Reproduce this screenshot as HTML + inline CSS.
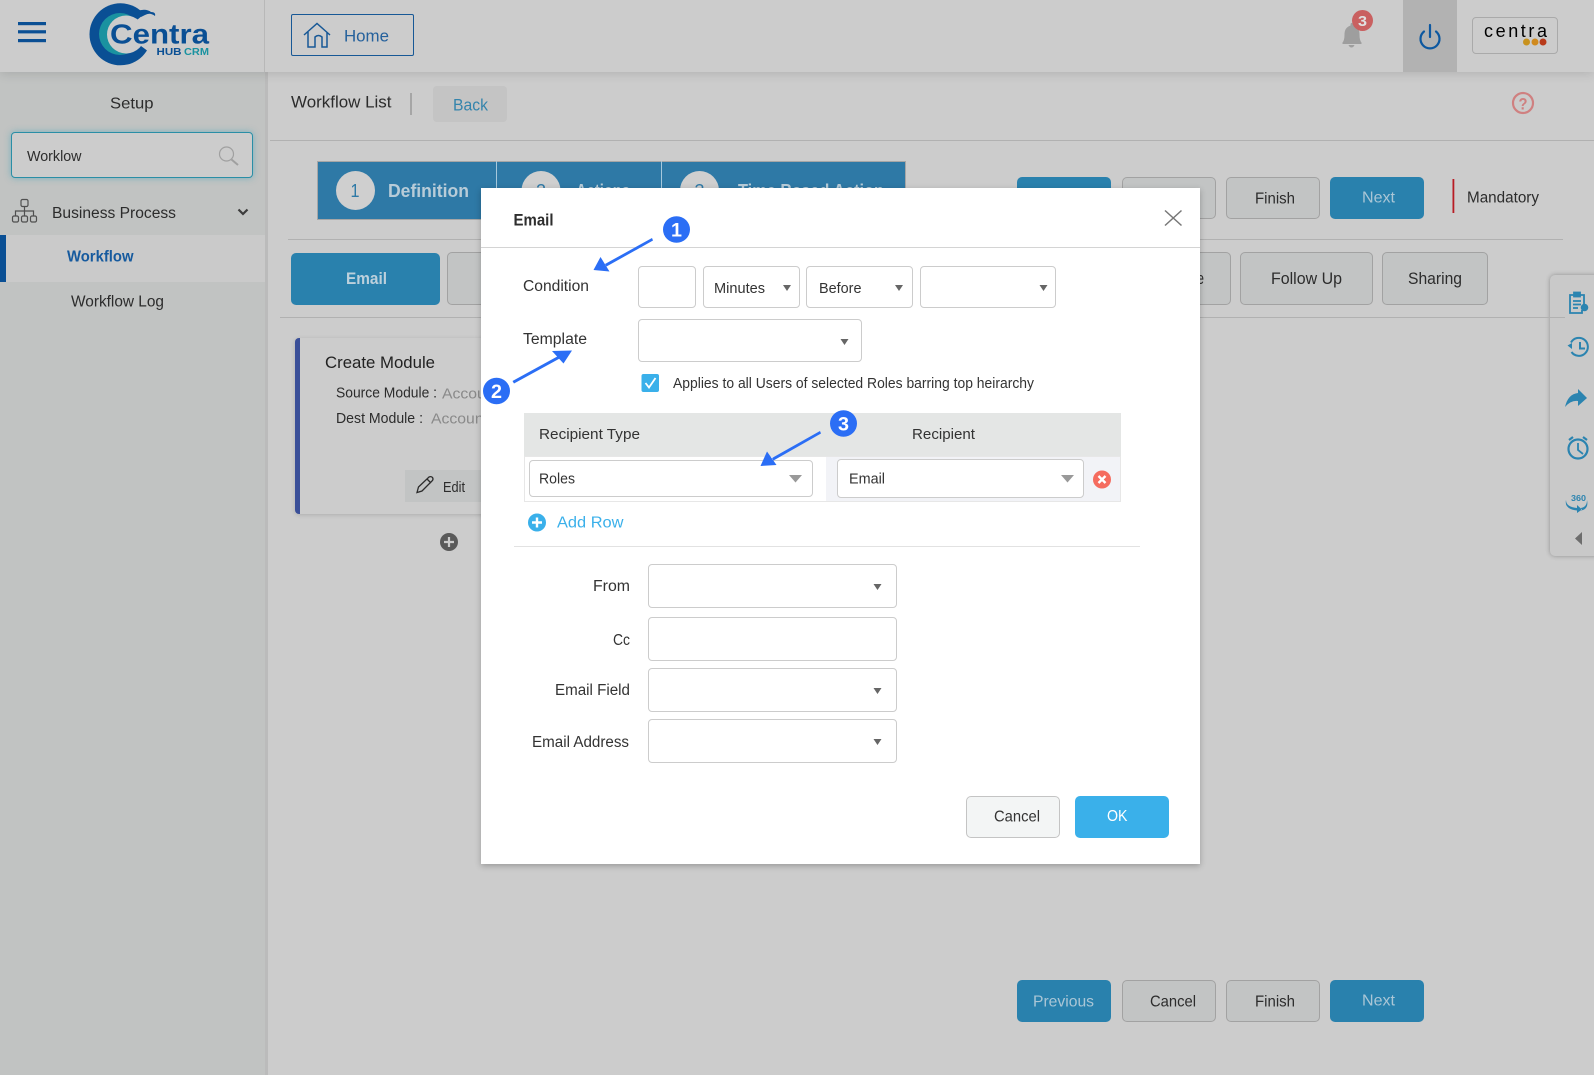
<!DOCTYPE html>
<html lang="en"><head><meta charset="utf-8"><title>Workflow - Email</title>
<style>
html,body{margin:0;padding:0;background:#ccc}
#p{position:relative;width:1594px;height:1075px;overflow:hidden;background:#ccc;font-family:"Liberation Sans",sans-serif}
#p div{position:absolute;box-sizing:border-box}
svg{position:absolute;left:0;top:0}
text{font-family:"Liberation Sans",sans-serif;font-size:15.5px;fill:#2c2c2c}
.m text{fill:#333}
.b{background:#2981ad;border-radius:5px}
.g{background:#c2c4c4;border:1px solid #a2a2a2;border-radius:5px}
.f{background:#fff;border:1px solid #ccc;border-radius:4px}
</style></head><body>
<div id="p">
 <div style="left:0;top:72px;width:265px;height:1003px;background:#c1c3c2"></div>
 <div style="left:265px;top:72px;width:3px;height:1003px;background:#bbb"></div>
 <div style="left:0;top:0;width:1594px;height:72px;background:#ccc;box-shadow:0 2px 10px rgba(0,0,0,.12)"></div>
 <div style="left:264px;top:0;width:1px;height:72px;background:#b8b8b8"></div>
 <div style="left:1403px;top:0;width:54px;height:72px;background:#b2b2b2"></div>
 <div style="left:291px;top:14px;width:123px;height:42px;border:1.5px solid #175896;border-radius:2px"></div>
 <div style="left:1472px;top:17px;width:86px;height:37px;border:1.5px solid #aaa;border-radius:4px;background:#ccc"></div>
 <div style="left:11px;top:132px;width:242px;height:46px;background:#ccc;border:1px solid #2a8ea6;border-radius:4px;box-shadow:0 0 7px rgba(46,157,184,.5)"></div>
 <div style="left:0;top:235px;width:265px;height:47px;background:#cacaca"></div>
 <div style="left:0;top:235px;width:6px;height:47px;background:#0a4f94"></div>
 <div style="left:433px;top:86px;width:74px;height:36px;background:#c4c4c4;border-radius:4px"></div>
 <div style="left:410px;top:93px;width:2px;height:22px;background:#a6a6a6"></div>
 <div style="left:317px;top:161px;width:589px;height:59px;background:#2e79a6;border:1px solid #a6a6a6"></div>
 <div style="left:496px;top:161px;width:1px;height:59px;background:#a6c8dc"></div>
 <div style="left:661px;top:161px;width:1px;height:59px;background:#a6c8dc"></div>
 <div style="left:1550px;top:275px;width:50px;height:281px;background:#c9c9c9;border-radius:5px;box-shadow:0 0 5px rgba(0,0,0,.3)"></div>
 <div style="left:270px;top:140px;width:1324px;height:1px;background:#b1b1b1"></div>
 <div style="left:288px;top:239px;width:1275px;height:1px;background:#b1b1b1"></div>
 <div style="left:280px;top:317px;width:1285px;height:1px;background:#b1b1b1"></div>
 <div class="b" style="left:291px;top:253px;width:149px;height:52px"></div>
 <div class="g" style="left:447px;top:252px;width:120px;height:53px"></div>
 <div class="g" style="left:1100px;top:252px;width:131px;height:53px"></div>
 <div class="g" style="left:1240px;top:252px;width:133px;height:53px"></div>
 <div class="g" style="left:1382px;top:252px;width:106px;height:53px"></div>
 <div class="b" style="left:1017px;top:177px;width:94px;height:42px"></div>
 <div class="g" style="left:1122px;top:177px;width:94px;height:42px"></div>
 <div class="g" style="left:1226px;top:177px;width:94px;height:42px"></div>
 <div class="b" style="left:1330px;top:177px;width:94px;height:42px"></div>
 <div class="b" style="left:1017px;top:980px;width:94px;height:42px"></div>
 <div class="g" style="left:1122px;top:980px;width:94px;height:42px"></div>
 <div class="g" style="left:1226px;top:980px;width:94px;height:42px"></div>
 <div class="b" style="left:1330px;top:980px;width:94px;height:42px"></div>
 <div style="left:295px;top:338px;width:300px;height:176px;background:#ccc;border-left:5px solid #3a4f98;border-radius:4px;box-shadow:0 1px 4px rgba(0,0,0,.15)"></div>
 <div style="left:405px;top:470px;width:100px;height:32px;background:#c2c4c4"></div>

 <svg width="1594" height="1075" viewBox="0 0 1594 1075">
  <g fill="#0a4f94"><rect x="18" y="22" width="28" height="3.200"/><rect x="18" y="30.200" width="28" height="3.200"/><rect x="18" y="39" width="28" height="3.200"/></g>
  <circle cx="120.500" cy="34.300" r="31" fill="#0a4f94"/>
  <circle cx="120" cy="34" r="21" fill="#1a92a0"/>
  <circle cx="126" cy="34.500" r="19" fill="#ccc"/>
  <path d="M141 46 L160 60 L190 60 L190 8 L152 10 Q147 13 143 15 L137 20 Z" fill="#ccc"/>
  <path d="M137 11 Q146 8 151 12 Q156 12 155 16 Q150 12 145 15 L141 17Z" fill="#0a4f94"/>
  <text x="110" y="43.500" textLength="99" lengthAdjust="spacingAndGlyphs" style="font-size:28px;font-weight:bold;fill:#0a4f94">Centra</text>
  <text x="156.500" y="55" textLength="25" lengthAdjust="spacingAndGlyphs" style="font-size:10.500px;font-weight:bold;fill:#0a4f94">HUB</text>
  <text x="184" y="55" textLength="25" lengthAdjust="spacingAndGlyphs" style="font-size:10.500px;font-weight:bold;fill:#1a92a0">CRM</text>
  <path d="M304 35 L317 23.500 L330 35 M308 32 V47 H315 V37 Q318.500 34 322 37 V47 H327 V32" fill="none" stroke="#175896" stroke-width="1.500"/>
  <text x="344" y="41.500" textLength="45" lengthAdjust="spacingAndGlyphs" style="font-size:17px;fill:#25619c">Home</text>
  <path d="M1351.500 23 q2 0 2 2.500 q6 2 6 9 q0 6 2 8 v1.500 h-19 v-1.500 q2 -2 2 -8 q0 -7 6 -9 q0 -2.500 1 -2.500Z M1348.500 45 h6 q-1 2.500 -3 2.500 t-3 -2.500Z" fill="#9e9e9e"/>
  <circle cx="1362.500" cy="20.500" r="10.500" fill="#c96060"/>
  <text x="1358" y="26" textLength="9" lengthAdjust="spacingAndGlyphs" style="font-size:15px;font-weight:bold;fill:#e0e0e0">3</text>
  <path d="M1424 31.500 A9.500 9.500 0 1 0 1436 31.500 M1430 25 V37" fill="none" stroke="#0d58a0" stroke-width="2.200" stroke-linecap="round"/>
  <text x="1484" y="37" textLength="63" lengthAdjust="spacing" style="font-size:18px;fill:#000">centra</text>
  <circle cx="1526.500" cy="42" r="3.500" fill="#c8921e"/><circle cx="1535" cy="42" r="3.500" fill="#d08a1e"/><circle cx="1543" cy="42" r="3.500" fill="#b83a1a"/>
  <circle cx="1523" cy="103" r="10" fill="none" stroke="#cf8080" stroke-width="2.200"/>
  <text x="1518.500" y="109.500" textLength="9" lengthAdjust="spacingAndGlyphs" style="font-size:17px;font-weight:bold;fill:#cf8080">?</text>

  <text x="110" y="108.500" textLength="43.500" lengthAdjust="spacingAndGlyphs" style="font-size:16px">Setup</text>
  <text x="27" y="161" textLength="54.500" lengthAdjust="spacingAndGlyphs" style="font-size:14.500px">Worklow</text>
  <circle cx="226.500" cy="154" r="7" fill="none" stroke="#a0a0a0" stroke-width="1.200"/><path d="M231.500 159.500 L238 165" stroke="#a0a0a0" stroke-width="2"/>
  <g fill="none" stroke="#505050" stroke-width="1.200"><rect x="21" y="199.500" width="7" height="7" rx="1.500"/><rect x="12.500" y="216" width="6" height="6" rx="1.500"/><rect x="21.500" y="216" width="6" height="6" rx="1.500"/><rect x="30.500" y="216" width="6" height="6" rx="1.500"/><path d="M24.500 206.500 V216 M15.500 216 V211 H33.500 V216"/></g>
  <text x="52" y="218" textLength="124" lengthAdjust="spacingAndGlyphs" style="font-size:15.500px">Business Process</text>
  <path d="M238.500 209.500 L243 214 L247.500 209.500" fill="none" stroke="#3c3c3c" stroke-width="2.200"/>
  <text x="67" y="261.500" textLength="66.500" lengthAdjust="spacingAndGlyphs" style="font-size:15.500px;font-weight:bold;fill:#165a9e">Workflow</text>
  <text x="71" y="306.500" textLength="93" lengthAdjust="spacingAndGlyphs" style="font-size:15.500px">Workflow Log</text>
  <text x="291" y="107.500" textLength="100.500" lengthAdjust="spacingAndGlyphs" style="font-size:16.500px">Workflow List</text>
  <text x="453" y="110.500" textLength="35" lengthAdjust="spacingAndGlyphs" style="font-size:16.500px;fill:#3484ac">Back</text>

  <circle cx="355.500" cy="190.500" r="19.500" fill="#cfcfcf"/>
  <text x="350.500" y="197" textLength="9" lengthAdjust="spacingAndGlyphs" style="font-size:18px;fill:#2e79a6">1</text>
  <text x="388" y="197" textLength="81" lengthAdjust="spacingAndGlyphs" style="font-size:18px;font-weight:bold;fill:#b8ccd8">Definition</text>
  <circle cx="541" cy="190.500" r="19.500" fill="#cfcfcf"/>
  <text x="536" y="197" style="font-size:18px;fill:#2e79a6">2</text>
  <text x="576" y="197" textLength="54" lengthAdjust="spacingAndGlyphs" style="font-size:18px;font-weight:bold;fill:#b8ccd8">Actions</text>
  <circle cx="699.500" cy="190.500" r="19.500" fill="#cfcfcf"/>
  <text x="694.500" y="197" style="font-size:18px;fill:#2e79a6">3</text>
  <text x="738" y="197" textLength="146" lengthAdjust="spacingAndGlyphs" style="font-size:18px;font-weight:bold;fill:#b8ccd8">Time Based Action</text>

  <text x="346" y="284" textLength="41" lengthAdjust="spacingAndGlyphs" style="font-size:17px;font-weight:bold;fill:#bcd0dc">Email</text>
  <text x="1165" y="284" textLength="39" lengthAdjust="spacingAndGlyphs" style="font-size:16.500px">Sche e</text>
  <text x="1271" y="284" textLength="71" lengthAdjust="spacingAndGlyphs" style="font-size:16.500px">Follow Up</text>
  <text x="1408" y="284" textLength="54" lengthAdjust="spacingAndGlyphs" style="font-size:16.500px">Sharing</text>

  <text x="1033" y="203" textLength="61" lengthAdjust="spacingAndGlyphs" style="font-size:16px;fill:#aac6d6">Previous</text>
  <text x="1150" y="203" textLength="46" lengthAdjust="spacingAndGlyphs" style="font-size:16px">Cancel</text>
  <text x="1255" y="203.500" textLength="40" lengthAdjust="spacingAndGlyphs" style="font-size:16px">Finish</text>
  <text x="1362" y="202.500" textLength="33" lengthAdjust="spacingAndGlyphs" style="font-size:16px;fill:#aac6d6">Next</text>
  <rect x="1452.500" y="179" width="1.800" height="34" fill="#b81c24"/>
  <text x="1467" y="202.500" textLength="72" lengthAdjust="spacingAndGlyphs" style="font-size:15.500px">Mandatory</text>

  <text x="1033" y="1006.500" textLength="61" lengthAdjust="spacingAndGlyphs" style="font-size:16px;fill:#aac6d6">Previous</text>
  <text x="1150" y="1006.500" textLength="46" lengthAdjust="spacingAndGlyphs" style="font-size:16px">Cancel</text>
  <text x="1255" y="1006.500" textLength="40" lengthAdjust="spacingAndGlyphs" style="font-size:16px">Finish</text>
  <text x="1362" y="1005.500" textLength="33" lengthAdjust="spacingAndGlyphs" style="font-size:16px;fill:#aac6d6">Next</text>

  <text x="325" y="368" textLength="110" lengthAdjust="spacingAndGlyphs" style="font-size:16.500px;fill:#222">Create Module</text>
  <text x="336" y="397.500" textLength="101" lengthAdjust="spacingAndGlyphs" style="font-size:14.500px">Source Module :</text>
  <text x="442" y="398.500" textLength="57" lengthAdjust="spacingAndGlyphs" style="font-size:14.500px;fill:#8a8a8a">Account</text>
  <text x="336" y="423" textLength="87" lengthAdjust="spacingAndGlyphs" style="font-size:14.500px">Dest Module :</text>
  <text x="431" y="423.500" textLength="57" lengthAdjust="spacingAndGlyphs" style="font-size:14.500px;fill:#8a8a8a">Account</text>
  <path d="M417 492.500 L418.500 487 L429 477 Q431 476 432.500 477.500 Q433.500 479 432.500 480.500 L422 491 Z M427 479 L431 483" fill="none" stroke="#2c2c2c" stroke-width="1.300"/>
  <text x="443" y="492" textLength="22" lengthAdjust="spacingAndGlyphs" style="font-size:14.500px">Edit</text>
  <circle cx="449" cy="542" r="9" fill="#5a5a5a"/><path d="M444 542 H454 M449 537 V547" stroke="#ccc" stroke-width="2.200"/>

  <g fill="none" stroke="#2b84b0" stroke-width="1.800">
   <path d="M1574 295 H1570 V313 H1582 V310 M1584 306 V295 H1580"/><rect x="1574" y="292.500" width="6" height="4" fill="#2b84b0"/>
   <path d="M1573 301 H1581 M1573 304.500 H1581 M1573 308 H1578"/>
   <path d="M1571 342.500 A9 9 0 1 1 1571.500 352" stroke-width="2"/><path d="M1580 342 V348.500 H1585" stroke-width="2"/>
   <circle cx="1578" cy="449" r="9.500" stroke-width="2.200"/><path d="M1578 443 V450 L1583 454"/><path d="M1569 440 L1573 437 M1587 440 L1583 437" stroke-width="2.200"/>
  </g>
  <circle cx="1584.500" cy="307.500" r="3.800" fill="#2b84b0"/>
  <path d="M1567.500 345.500 L1572 343 L1572 349Z" fill="#2b84b0"/>
  <path d="M1565 407 Q1568 394 1578 393 V389 L1587 398 L1578 406 V401 Q1571 400 1565 407Z" fill="#2b84b0"/>
  <text x="1571" y="501" textLength="15" lengthAdjust="spacingAndGlyphs" style="font-size:8px;font-weight:bold;fill:#2b84b0">360</text>
  <path d="M1566 500 Q1566 507 1577 508 V505 L1582 509.500 L1577 513 V510.500 Q1564 509 1566 500Z M1587 500 Q1587 507 1581 508 L1581 510.500 Q1589 509 1587 500Z" fill="#2b84b0"/>
  <path d="M1582 532 V545 L1575 538.500Z" fill="#6d6d6d"/>
 </svg>

 <div style="left:481px;top:188px;width:719px;height:676px;background:#fff;box-shadow:0 2px 6px rgba(0,0,0,.25)"></div>
 <div style="left:481px;top:247px;width:719px;height:1px;background:#d4d4d4"></div>
 <div class="f" style="left:638px;top:266px;width:58px;height:42px"></div>
 <div class="f" style="left:703px;top:266px;width:97px;height:42px"></div>
 <div class="f" style="left:806px;top:266px;width:107px;height:42px"></div>
 <div class="f" style="left:920px;top:266px;width:136px;height:42px"></div>
 <div class="f" style="left:638px;top:319px;width:224px;height:43px"></div>
 <div style="left:524px;top:413px;width:597px;height:43px;background:#e4e6e5"></div>
 <div style="left:524px;top:456px;width:597px;height:46px;border:1px solid #e7e7e7"></div>
 <div style="left:826px;top:456px;width:295px;height:46px;background:#f2f3f7;border:1px solid #e7e7e7;border-left:0"></div>
 <div class="f" style="left:529px;top:460px;width:284px;height:37px"></div>
 <div class="f" style="left:837px;top:459px;width:247px;height:39px"></div>
 <div style="left:514px;top:546px;width:626px;height:1px;background:#e2e2e2"></div>
 <div class="f" style="left:648px;top:564px;width:249px;height:44px"></div>
 <div class="f" style="left:648px;top:617px;width:249px;height:44px"></div>
 <div class="f" style="left:648px;top:668px;width:249px;height:44px"></div>
 <div class="f" style="left:648px;top:719px;width:249px;height:44px"></div>
 <div style="left:966px;top:796px;width:94px;height:42px;background:#f3f5f5;border:1px solid #c4c4c4;border-radius:5px"></div>
 <div style="left:1075px;top:796px;width:94px;height:42px;background:#3ab0ea;border-radius:5px"></div>

 <svg class="m" width="1594" height="1075" viewBox="0 0 1594 1075">
  <text x="513.500" y="225.500" textLength="40" lengthAdjust="spacingAndGlyphs" style="font-size:16.500px;font-weight:bold;fill:#2e2e2e">Email</text>
  <path d="M1165 210.500 L1181.500 225.500 M1181.500 210.500 L1165 225.500" stroke="#777" stroke-width="1.500"/>
  <text x="523" y="291" textLength="66" lengthAdjust="spacingAndGlyphs" style="font-size:15.500px">Condition</text>
  <text x="523" y="344" textLength="64" lengthAdjust="spacingAndGlyphs" style="font-size:15.500px">Template</text>
  <text x="714" y="293" textLength="51" lengthAdjust="spacingAndGlyphs" style="font-size:15px">Minutes</text>
  <text x="819" y="293" textLength="42.500" lengthAdjust="spacingAndGlyphs" style="font-size:15px">Before</text>
  <g fill="#666">
   <path d="M783 285 h8 l-4 6Z"/><path d="M895 285 h8 l-4 6Z"/><path d="M1039.500 285 h8 l-4 6Z"/><path d="M840.500 339 h8 l-4 6Z"/>
   <path d="M873.500 584 h8 l-4 6Z"/><path d="M873.500 688 h8 l-4 6Z"/><path d="M873.500 739 h8 l-4 6Z"/>
  </g>
  <g fill="#999"><path d="M789 475 h13 l-6.500 7.500Z"/><path d="M1061 475 h13 l-6.500 7.500Z"/></g>
  <rect x="641.500" y="374" width="17.500" height="18" rx="2" fill="#3ab0ea"/>
  <path d="M645.500 383 L649 387.500 L655.500 378" fill="none" stroke="#fff" stroke-width="1.800"/>
  <text x="673" y="388" textLength="361" lengthAdjust="spacingAndGlyphs" style="font-size:14.500px">Applies to all Users of selected Roles barring top heirarchy</text>
  <text x="539" y="439" textLength="101" lengthAdjust="spacingAndGlyphs" style="font-size:15px">Recipient Type</text>
  <text x="912" y="439" textLength="63" lengthAdjust="spacingAndGlyphs" style="font-size:15px">Recipient</text>
  <text x="539" y="483.500" textLength="36" lengthAdjust="spacingAndGlyphs" style="font-size:15px">Roles</text>
  <text x="849" y="483.500" textLength="36" lengthAdjust="spacingAndGlyphs" style="font-size:15px">Email</text>
  <circle cx="1102" cy="479.500" r="9" fill="#f56c5f"/>
  <path d="M1098.500 476 L1105.500 483 M1105.500 476 L1098.500 483" stroke="#fff" stroke-width="2.400"/>
  <circle cx="537" cy="522.500" r="9" fill="#3ab0ea"/>
  <path d="M532 522.500 H542 M537 517.500 V527.500" stroke="#fff" stroke-width="2.400"/>
  <text x="557" y="527.500" textLength="66.500" lengthAdjust="spacingAndGlyphs" style="font-size:16px;fill:#3ab0ea">Add Row</text>
  <text x="593" y="591" textLength="37" lengthAdjust="spacingAndGlyphs" style="font-size:15.500px">From</text>
  <text x="613" y="645" textLength="17" lengthAdjust="spacingAndGlyphs" style="font-size:15.500px">Cc</text>
  <text x="555" y="695" textLength="75" lengthAdjust="spacingAndGlyphs" style="font-size:15.500px">Email Field</text>
  <text x="532" y="747" textLength="97" lengthAdjust="spacingAndGlyphs" style="font-size:15.500px">Email Address</text>
  <text x="994" y="821.500" textLength="46" lengthAdjust="spacingAndGlyphs" style="font-size:16px">Cancel</text>
  <text x="1107" y="821" textLength="20.500" lengthAdjust="spacingAndGlyphs" style="font-size:16px;fill:#fff">OK</text>

  <g fill="#2b6ef5" stroke="none">
   <path d="M652 238 L605 264 L606.500 266.500 L653 240.500Z"/><path d="M593.500 270 L609.500 271.500 L600.500 257Z"/>
   <path d="M512.500 381 L560 355 L561.500 357.500 L514 383.500Z"/><path d="M572 350.500 L552 351 L563.500 363.500Z"/>
   <path d="M820 431 L772 458 L773.500 460.500 L821 433.500Z"/><path d="M760.500 466 L776.500 465 L767 451.500Z"/>
   <ellipse cx="676.500" cy="229.500" rx="13.500" ry="13.300"/><ellipse cx="496.500" cy="391" rx="13.500" ry="13.300"/><ellipse cx="843.500" cy="423.500" rx="13.500" ry="13.300"/>
  </g>
  <text x="671" y="236.500" textLength="11" lengthAdjust="spacingAndGlyphs" style="font-size:19px;font-weight:bold;fill:#fff">1</text>
  <text x="491" y="398" textLength="11" lengthAdjust="spacingAndGlyphs" style="font-size:19px;font-weight:bold;fill:#fff">2</text>
  <text x="838" y="430.500" textLength="11" lengthAdjust="spacingAndGlyphs" style="font-size:19px;font-weight:bold;fill:#fff">3</text>
 </svg>
</div>
</body></html>
